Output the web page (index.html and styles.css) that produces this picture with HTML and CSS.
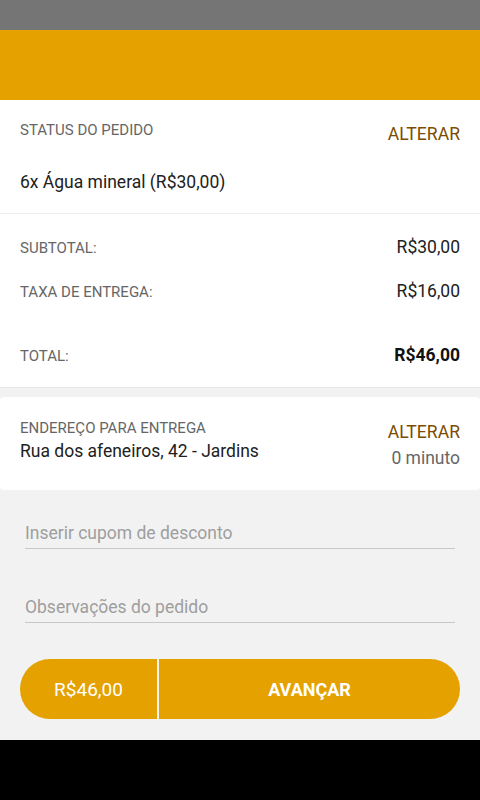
FILE: index.html
```html
<!DOCTYPE html>
<html lang="pt-BR">
<head>
<meta charset="utf-8">
<title>Pedido</title>
<link rel="stylesheet" href="styles.css">
</head>
<body>
<div class="screen">
  <div class="statusbar"></div>
  <header class="appbar"></header>
  <main class="content">
    <section class="card order">
      <div class="order-head">
        <span class="label">STATUS DO PEDIDO</span>
        <span class="link">ALTERAR</span>
      </div>
      <div class="item">6x Água mineral (R$30,00)</div>
    </section>
    <section class="card totals">
      <div class="row"><span class="label">SUBTOTAL:</span><span class="value">R$30,00</span></div>
      <div class="row"><span class="label">TAXA DE ENTREGA:</span><span class="value">R$16,00</span></div>
      <div class="row total"><span class="label">TOTAL:</span><span class="value strong">R$46,00</span></div>
    </section>
    <section class="card address">
      <div class="addr-left">
        <span class="label">ENDEREÇO PARA ENTREGA</span>
        <span class="addr">Rua dos afeneiros, 42 - Jardins</span>
      </div>
      <div class="addr-right">
        <span class="link">ALTERAR</span>
        <span class="eta">0 minuto</span>
      </div>
    </section>
    <div class="form">
      <input class="field" type="text" placeholder="Inserir cupom de desconto">
      <input class="field second" type="text" placeholder="Observações do pedido">
      <div class="cta">
        <div class="cta-price">R$46,00</div>
        <div class="cta-go">AVANÇAR</div>
      </div>
    </div>
  </main>
  <div class="navbar"></div>
</div>
</body>
</html>
```

FILE: styles.css
```css
* { box-sizing: border-box; }
html, body { margin: 0; padding: 0; }
body {
  font-family: Roboto, "Noto Sans", sans-serif;
  background: #f2f2f2;
  width: 480px;
  height: 800px;
  overflow: hidden;
}
.screen { display: flex; flex-direction: column; height: 800px; }
.statusbar { height: 30px; background: #757575; flex: none; }
.appbar { height: 70px; background: #e5a100; flex: none; }
.content { flex: 1; display: flex; flex-direction: column; background: #f2f2f2; }
.navbar { height: 60px; background: #000; flex: none; }

.card { background: #fff; }
.label { font-size: 15px; line-height: 20px; color: #666; }
.link { font-size: 17.6px; line-height: 20px; color: #7d4c00; }

.order { padding: 20px 20px 21px; border-bottom: 1px solid #ececec; }
.order-head { display: flex; justify-content: space-between; align-items: flex-start; }
.order-head .link { margin-top: 4px; }
.item { margin-top: 28px; font-size: 17.5px; line-height: 20px; color: #212121; }

.totals { padding: 23px 20px 22px; display: flex; flex-direction: column; gap: 24px; border-bottom: 1px solid #e6e6e6; }
.row { display: flex; justify-content: space-between; align-items: center; height: 20px; }
.row .label { position: relative; top: 1px; }
.row.total { margin-top: 20px; }
.value { font-size: 17.5px; line-height: 20px; color: #212121; }
.strong { font-weight: 700; color: #111; }

.address {
  margin-top: 9px;
  padding: 22px 20px 22px;
  border-radius: 4px;
  display: flex;
  justify-content: space-between;
}
.addr-left, .addr-right { display: flex; flex-direction: column; }
.addr-left .label { line-height: 18px; }
.addr { margin-top: 4px; font-size: 17.5px; line-height: 20px; color: #212121; }
.addr-right { align-items: flex-end; padding-top: 3px; }
.eta { margin-top: 6px; font-size: 17.5px; line-height: 20px; color: #666; }

.form { padding: 33px 20px 21px; display: flex; flex-direction: column; }
.field {
  display: block;
  margin: 0 5px;
  height: 26px;
  padding: 0 0 5px;
  border: 0;
  border-bottom: 1px solid #c8c8c8;
  background: transparent;
  font-family: Roboto, "Noto Sans", sans-serif;
  font-size: 17.5px;
  line-height: 20px;
  color: #333;
  outline: none;
}
.field::placeholder { color: #9e9e9e; }
.field.second { margin-top: 48px; }

.cta { margin-top: 36px; height: 60px; display: flex; gap: 2px; }
.cta-price, .cta-go {
  background: #e5a100;
  color: #fff;
  display: flex;
  align-items: center;
  justify-content: center;
}
.cta-price { width: 137px; border-radius: 30px 0 0 30px; font-size: 19px; }
.cta-go { flex: 1; border-radius: 0 30px 30px 0; font-weight: 700; font-size: 18px; }
```
